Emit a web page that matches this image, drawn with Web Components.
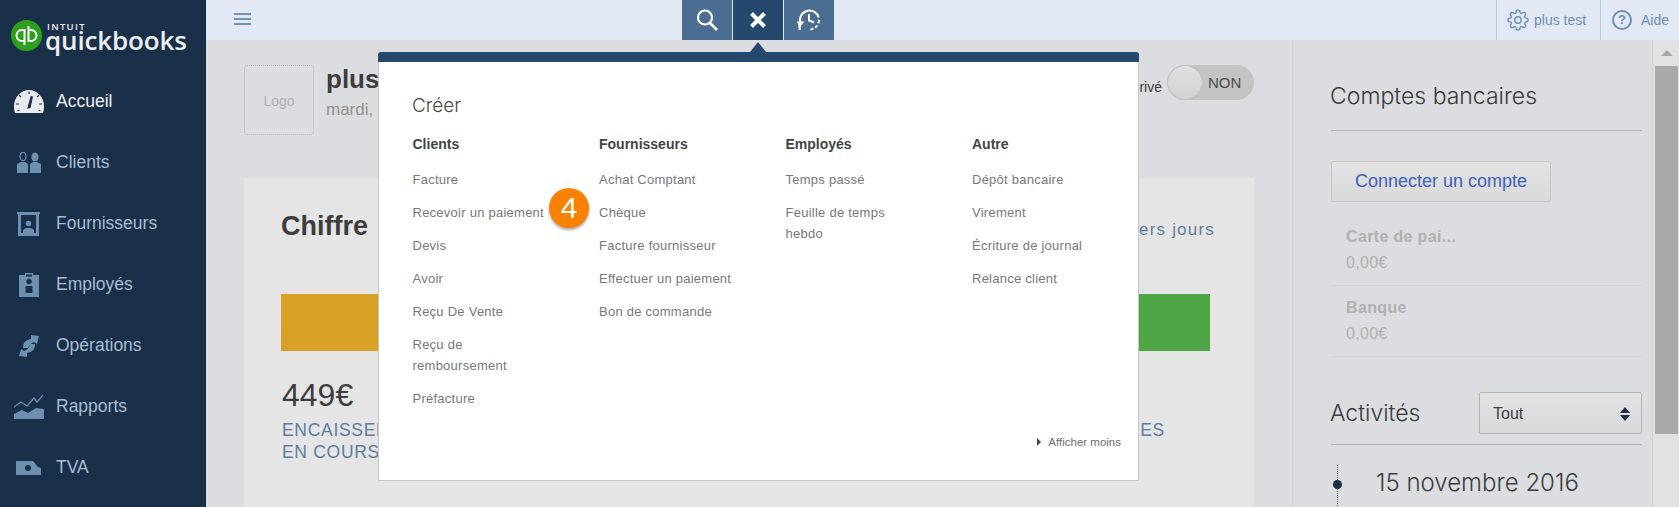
<!DOCTYPE html>
<html lang="fr">
<head>
<meta charset="utf-8">
<title>QuickBooks</title>
<style>
  html, body { margin: 0; height: 100%; overflow: hidden; background: #dcdde1; }
  body { font-family: "Liberation Sans", Arial, sans-serif; }
</style>
</head>
<body>
<qb-app></qb-app>
<script>
const light = '"Inter", "Liberation Sans", sans-serif';

const icons = {
  home: `<svg width="30" height="25" viewBox="0 0 30 25"><path fill="#e8ebef" d="M1 24C0 21 0 19 0 17 0 8 7 1 15 1s15 7 15 16c0 2 0 4-1 7z"/><path d="M14 19l2-.4 2.300-10.600-1.200-.2zM5 6l2 2M25 6l-2 2M15 2.500v2.500M2 15h3M25 15h3M3.500 22l2-1M26.500 22l-2-1" stroke="#1a2f48" stroke-width="1.200" fill="#1a2f48"/></svg>`,
  clients: `<svg width="24" height="22" viewBox="0 0 24 22"><g fill="#6d8fb0"><path d="M0 21v-9l4-2h4l3 2v9z"/><path d="M13 21v-9l3-2h4l4 2v9z"/><ellipse cx="18" cy="5" rx="3.600" ry="4.600"/></g><ellipse cx="6" cy="4.500" rx="3" ry="4.200" fill="none" stroke="#6d8fb0" stroke-width="1.300"/></svg>`,
  suppliers: `<svg width="23" height="24" viewBox="0 0 23 24"><path fill="#6d8fb0" d="M0 0h23v2h-1v22H1V2H0z"/><path fill="#1a2f48" d="M4 3h15v18h-2v-3l-3-2h-5l-3 2v3H4z"/><circle cx="11.500" cy="11.500" r="2.800" fill="#6d8fb0"/><path fill="#6d8fb0" d="M7 21v-3l2.500-1.500h4l2.500 1.500v3z"/></svg>`,
  employees: `<svg width="20" height="24" viewBox="0 0 20 24"><path fill="#6d8fb0" d="M0 2h6V0h8v2h6v22H0z"/><rect x="7" y="1.500" width="6" height="2" fill="#1a2f48"/><circle cx="10" cy="8.500" r="2.700" fill="#1a2f48"/><rect x="6.500" y="13" width="7" height="7" rx="1" fill="#1a2f48"/></svg>`,
  transactions: `<svg width="20" height="24" viewBox="0 0 20 24"><g fill="#6d8fb0"><path d="M4 14C4 8 7 6 12 5V1l8 1-2 8-3-2c-3 1-5 3-6 6z"/><path d="M16 10c0 6-3 8-8 9v4l-8-1 2-7 3 2c3-1 5-3 6-7z"/></g></svg>`,
  reports: `<svg width="30" height="24" viewBox="0 0 30 24"><path fill="none" stroke="#6d8fb0" stroke-width="1.300" d="M0 12l7-5 6 4 7-8 3 4 6-7"/><path fill="#6d8fb0" d="M0 24v-5l8-4 6 3 8-5 8 1v10z"/></svg>`,
  tax: `<svg width="25" height="14" viewBox="0 0 25 14"><path fill="#6d8fb0" fill-rule="evenodd" d="M0 0h17l5 6 3 1v7H0zM12 4a3 3 0 1 0 0 6 3 3 0 0 0 0-6z"/></svg>`,
  search: `<svg width="24" height="24" viewBox="0 0 24 24"><circle cx="10" cy="9.500" r="7" fill="none" stroke="#fff" stroke-width="2.200"/><path d="M15 15l7 7" stroke="#fff" stroke-width="2.600"/></svg>`,
  close: `<svg width="18" height="18" viewBox="0 0 18 18"><path d="M2.500 2.500l13 13M15.500 2.500l-13 13" stroke="#fff" stroke-width="4"/></svg>`,
  recent: `<svg width="24" height="24" viewBox="0 0 24 24"><g fill="none" stroke="#fff" stroke-width="2"><path d="M3.500 15A9.500 9.500 0 1 1 12.500 21.500" stroke-dasharray="30 2.500 3.500 2.500 3 2 3 2"/><path d="M12 6v6.500l5 2"/></g><path fill="#fff" d="M0 13.500h7.500l-3.700 4.500v4H1.500v-4z"/></svg>`,
  gear: `<svg width="22" height="22" viewBox="0 0 24 24" fill="none" stroke="#6c8fb3" stroke-width="1.500"><circle cx="12" cy="12" r="3.500"/><path d="M19.400 15a1.650 1.650 0 0 0 .33 1.820l.06.06a2 2 0 0 1 0 2.830 2 2 0 0 1-2.830 0l-.06-.06a1.650 1.650 0 0 0-1.820-.33 1.650 1.650 0 0 0-1 1.510V21a2 2 0 0 1-2 2 2 2 0 0 1-2-2v-.09A1.650 1.650 0 0 0 9 19.400a1.650 1.650 0 0 0-1.820.33l-.06.06a2 2 0 0 1-2.830 0 2 2 0 0 1 0-2.830l.06-.06a1.650 1.650 0 0 0 .33-1.820 1.650 1.650 0 0 0-1.510-1H3a2 2 0 0 1-2-2 2 2 0 0 1 2-2h.09A1.650 1.650 0 0 0 4.600 9a1.650 1.650 0 0 0-.33-1.820l-.06-.06a2 2 0 0 1 0-2.830 2 2 0 0 1 2.830 0l.06.06a1.650 1.650 0 0 0 1.820.33H9a1.650 1.650 0 0 0 1-1.510V3a2 2 0 0 1 2-2 2 2 0 0 1 2 2v.09a1.650 1.650 0 0 0 1 1.510 1.650 1.650 0 0 0 1.820-.33l.06-.06a2 2 0 0 1 2.830 0 2 2 0 0 1 0 2.830l-.06.06a1.650 1.650 0 0 0-.33 1.820V9a1.650 1.650 0 0 0 1.510 1H21a2 2 0 0 1 2 2 2 2 0 0 1-2 2h-.09a1.650 1.650 0 0 0-1.510 1z"/></svg>`,
};

// left navigation row
class QbNavItem extends HTMLElement {
  constructor() {
    super();
    const root = this.attachShadow({ mode: 'open' });
    root.innerHTML = `
      <style>
        :host { display: flex; align-items: center; height: 61px; color: #a9bdd2; font-size: 17.500px; }
        :host([active]) { color: #eef0f3; }
        .ico { width: 56px; padding: 0 12px 0 13px; box-sizing: border-box; display: flex; justify-content: center; }
      </style>
      <span class="ico">${icons[this.getAttribute('icon')]}</span><slot></slot>`;
  }
}
customElements.define('qb-nav-item', QbNavItem);

class QbSidebar extends HTMLElement {
  constructor() {
    super();
    const root = this.attachShadow({ mode: 'open' });
    root.innerHTML = `
      <style>
        :host { display: block; width: 206px; flex: none; background: #1a2f48; height: 507px; box-sizing: border-box; border-right: 1px solid #14263b; overflow: hidden; }
        .logo { display: flex; height: 71px; padding: 20px 0 0 11px; box-sizing: border-box; color: #eceef1; }
        .logo svg { flex: none; }
        .name { margin-left: 3px; display: flex; flex-direction: column; font-family: "Open Sans", sans-serif; }
        .intuit { font-size: 9.500px; line-height: 9px; letter-spacing: 1.300px; font-weight: 600; margin: 2px 0 0 2px; }
        .qb { font-size: 26px; line-height: 19px; font-weight: 600; letter-spacing: -.15px; }
      </style>
      <div class="logo">
        <svg width="31" height="31" viewBox="0 0 31 31"><circle cx="15.500" cy="15.500" r="15.500" fill="#2ca01c"/><g fill="none" stroke="#fff" stroke-width="2"><path d="M13.500 21h-2.500a5.500 5.500 0 0 1 0-11h2.500v15"/><path d="M17.500 10h2.500a5.500 5.500 0 0 1 0 11h-2.500V6"/></g></svg>
        <div class="name"><span class="intuit">INTUIT</span><span class="qb">quickbooks</span></div>
      </div>
      <slot></slot>`;
  }
}
customElements.define('qb-sidebar', QbSidebar);

class QbTopbar extends HTMLElement {
  constructor() {
    super();
    const root = this.attachShadow({ mode: 'open' });
    root.innerHTML = `
      <style>
        :host { display: flex; height: 40px; background: #e2e9f4; flex: none; color: #6c8fb3; font-size: 14px; }
        .burger { width: 17px; height: 12px; margin: 13px 0 0 28px; border-top: 2px solid #7094b8; border-bottom: 2px solid #7094b8; box-sizing: border-box; position: relative; }
        .burger::after { content: ""; position: absolute; left: 0; right: 0; top: 3px; height: 2px; background: #7094b8; }
        .tools { display: flex; margin-left: 431px; gap: 1px; }
        .tools span { width: 50px; height: 40px; background: #4a6d92; display: flex; align-items: center; justify-content: center; }
        .tools span.on { background: #25496e; }
        .right { display: flex; margin-left: auto; }
        .right div { display: flex; align-items: center; border-left: 1px solid #b8cce2; height: 40px; box-sizing: border-box; }
        .acct { width: 104px; padding-left: 10px; gap: 5px; }
        .help { width: 79px; padding-left: 11px; gap: 9px; }
        .q { width: 20px; height: 20px; border: 2px solid #6c8fb3; border-radius: 50%; box-sizing: border-box; text-align: center; line-height: 16px; font-weight: bold; font-size: 13px; }
      </style>
      <div class="burger"></div>
      <div class="tools">
        <span>${icons.search}</span><span class="on">${icons.close}</span><span>${icons.recent}</span>
      </div>
      <div class="right">
        <div class="acct">${icons.gear}<span>plus test</span></div>
        <div class="help"><span class="q">?</span><span>Aide</span></div>
      </div>`;
  }
}
customElements.define('qb-topbar', QbTopbar);

// dimmed dashboard under the create menu
class QbOverview extends HTMLElement {
  constructor() {
    super();
    const root = this.attachShadow({ mode: 'open' });
    root.innerHTML = `
      <style>
        :host { display: block; width: 1087px; flex: none; box-sizing: border-box; padding: 25px 38px 0 38px; border-right: 1px solid #cfd0d4; overflow: hidden; color: #3d3d3d; }
        .head { display: flex; height: 113px; }
        .logo { width: 70px; height: 70px; box-sizing: border-box; border: 1px dotted #b5b5b5; border-radius: 3px; display: flex; align-items: center; justify-content: center; color: #b0b0b0; font-size: 14px; padding-top: 2px; }
        .who { margin-left: 12px; }
        .who b { display: block; font-size: 26px; line-height: 30px; margin-top: -1px; }
        .who span { display: block; font-size: 17px; color: #8f8f8f; line-height: 32px; }
        .priv { margin-left: auto; display: flex; align-items: flex-start; font-size: 14px; gap: 5px; }
        .priv span { line-height: 44px; }
        .toggle { width: 87px; height: 35px; border-radius: 18px; background: #c4c4c4; display: flex; align-items: center; font-size: 15px; color: #4a4a4a; }
        .toggle i { width: 34px; height: 33px; margin: 0 6px 0 1px; border-radius: 50%; background: linear-gradient(#e0e0e1, #d2d2d3); display: block; box-shadow: 0 0 1px #999; }
        .card { background: #e5e5e6; height: 360px; padding: 33px 38px 0 37px; box-sizing: border-box; }
        .title { display: flex; justify-content: space-between; align-items: baseline; }
        .title b { font-size: 27px; }
        .title span { font-size: 17px; color: #5f7d9d; letter-spacing: 1.200px; margin-right: 1px; }
        .bar { display: flex; height: 57px; margin-top: 52px; margin-right: 6px; }
        .bar i { display: block; }
        .amt { display: flex; justify-content: space-between; margin-top: 25px; padding-left: 1px; padding-right: 51px; }
        .amt strong { display: block; font-weight: normal; font-size: 32px; line-height: 38px; }
        .amt small { display: block; font-size: 17.500px; line-height: 22px; letter-spacing: .7px; color: #5c7c9f; margin-top: 5px; }
      </style>
      <div class="head">
        <div class="logo">Logo</div>
        <div class="who"><b>plus</b><span>mardi,</span></div>
        <div class="priv"><span>Mode privé</span><div class="toggle"><i></i>NON</div></div>
      </div>
      <div class="card">
        <div class="title"><b>Chiffre</b><span>30 derniers jours</span></div>
        <div class="bar">
          <i style="flex:1;background:#d8a024"></i>
          <i style="flex:1;background:#4ea646"></i>
        </div>
        <div class="amt">
          <div><strong>449€</strong><small>ENCAISSEMENTS<br>EN COURS</small></div>
          <div><small style="margin-top:43px">LES</small></div>
        </div>
      </div>`;
  }
}
customElements.define('qb-overview', QbOverview);

class QbRail extends HTMLElement {
  constructor() {
    super();
    const root = this.attachShadow({ mode: 'open' });
    root.innerHTML = `
      <style>
        :host { display: block; width: 360px; flex: none; box-sizing: border-box; padding: 0 10px 0 38px; border-right: 1px solid #cfd0d4; color: #3d3d3d; overflow: hidden; }
        h2 { font: 300 23px/30px ${light}; margin: 41px 0 0; height: 49px; border-bottom: 1px solid #b4b4b4; color: #3a3a3a; text-indent: -1px; }
        .btn { width: 220px; height: 41px; box-sizing: border-box; margin-top: 30px; border: 1px solid #c8c8c8; border-radius: 2px; background: linear-gradient(#e3e3e4, #d9d9da); color: #3e60bd; font-size: 18px; display: flex; align-items: center; justify-content: center; }
        .acc { padding-left: 15px; height: 71px; border-bottom: 1px solid #d4d5d8; color: #b0b0b0; box-sizing: border-box; }
        .acc b { display: block; font-size: 16px; line-height: 20px; padding-top: 25px; letter-spacing: .35px; }
        .acc span { display: block; font-size: 16px; line-height: 20px; margin-top: 6px; letter-spacing: .3px; }
        .acc.first { height: 84px; }
        .row { display: flex; justify-content: space-between; align-items: center; height: 88px; border-bottom: 1px solid #b4b4b4; box-sizing: border-box; padding: 35px 0 10px; }
        .row h3 { font: 300 23px/30px ${light}; margin: 0 0 0 -1px; color: #3a3a3a; }
        .sel { width: 163px; height: 42px; box-sizing: border-box; border: 1px solid #b4b4b4; border-radius: 2px; background: linear-gradient(#e3e3e4, #d9d9da); display: flex; align-items: center; justify-content: space-between; padding: 1px 11px 0 13px; font-size: 16px; }
        .sel svg { display: block; }
        .date { display: flex; align-items: center; height: 63px; font: 300 24px/30px ${light}; position: relative; padding: 12px 0 0 45px; box-sizing: border-box; }
        .date::before { content: ""; position: absolute; left: 6px; top: 20px; bottom: 0; border-left: 1px dotted #555; }
        .date::after { content: ""; position: absolute; left: 2px; top: 35px; width: 9px; height: 9px; border-radius: 50%; background: #1a2f48; }
      </style>
      <h2>Comptes bancaires</h2>
      <div class="btn">Connecter un compte</div>
      <div class="acc first"><b>Carte de pai...</b><span>0,00€</span></div>
      <div class="acc"><b style="padding-top:12px">Banque</b><span>0,00€</span></div>
      <div class="row"><h3>Activités</h3><div class="sel">Tout<svg width="10" height="14" viewBox="0 0 10 14"><path fill="#1a2f48" d="M5 0l5 6H0zM5 14l5-6H0z"/></svg></div></div>
      <div class="date">15 novembre 2016</div>`;
  }
}
customElements.define('qb-rail', QbRail);

class QbScrollbar extends HTMLElement {
  constructor() {
    super();
    const root = this.attachShadow({ mode: 'open' });
    root.innerHTML = `
      <style>
        :host { display: flex; flex-direction: column; align-items: center; flex: 1; background: #e1e2e4; padding-left: 2px; padding-right: 1px; box-sizing: border-box; }
        .up { width: 0; height: 0; margin-top: 10px; border: 6px solid transparent; border-top: 0; border-bottom: 6px solid #a8a8a8; }
        .thumb { margin-top: 10px; width: 100%; height: 368px; background: #a9a9a9; }
      </style>
      <div class="up"></div><div class="thumb"></div>`;
  }
}
customElements.define('qb-scrollbar', QbScrollbar);

class QbMenuCol extends HTMLElement {
  constructor() {
    super();
    const root = this.attachShadow({ mode: 'open' });
    root.innerHTML = `
      <style>
        :host { display: block; width: 186.500px; flex: none; }
        b { display: block; font-size: 14px; line-height: 20px; color: #434343; margin-bottom: 9px; }
      </style>
      <b>${this.getAttribute('heading')}</b><slot></slot>`;
  }
}
customElements.define('qb-menu-col', QbMenuCol);

class QbMenuLink extends HTMLElement {
  constructor() {
    super();
    const root = this.attachShadow({ mode: 'open' });
    root.innerHTML = `
      <style>
        :host { display: block; width: 135px; font-size: 13px; line-height: 21px; padding: 6px 0; color: #787878; letter-spacing: .25px; }
      </style>
      <slot></slot>`;
  }
}
customElements.define('qb-menu-link', QbMenuLink);

// the create menu, opened from the X button
class QbCreatePanel extends HTMLElement {
  constructor() {
    super();
    const root = this.attachShadow({ mode: 'open' });
    root.innerHTML = `
      <style>
        :host { position: absolute; left: 378px; top: 52px; width: 761px; height: 429px; box-sizing: border-box; background: #fff; border: 1px solid #c6c6c6; border-top: 0; border-radius: 3px 3px 0 0; }
        .band { height: 10px; margin: 0 -1px; background: #25496e; border-radius: 3px 3px 0 0; position: relative; }
        .band::before { content: ""; position: absolute; left: 372px; top: -10px; border: 8px solid transparent; border-top: 0; border-bottom: 10px solid #25496e; }
        h2 { font: 300 19px/26px ${light}; color: #474747; margin: 31px 0 0 33px; height: 41px; }
        .cols { display: flex; padding-left: 33.500px; }
        .more { position: absolute; right: 17px; bottom: 32px; font-size: 11.500px; color: #6e6e6e; display: flex; align-items: center; gap: 7px; }
        .more::before { content: ""; border: 4px solid transparent; border-left: 4px solid #444; border-right: 0; }
        .step { position: absolute; left: 170px; top: 136px; width: 40px; height: 40px; border-radius: 50%; background: #fb8100; color: #fff; font: 30px/40px "Liberation Sans", sans-serif; text-align: center; box-shadow: 0 2px 3px rgba(0,0,0,.35); }
      </style>
      <div class="band"></div>
      <h2>Créer</h2>
      <div class="cols"><slot></slot></div>
      <div class="more">Afficher moins</div>
      <div class="step">4</div>`;
  }
}
customElements.define('qb-create-panel', QbCreatePanel);

class QbApp extends HTMLElement {
  constructor() {
    super();
    const root = this.attachShadow({ mode: 'open' });
    const nav = [['home', 'Accueil'], ['clients', 'Clients'], ['suppliers', 'Fournisseurs'], ['employees', 'Employés'], ['transactions', 'Opérations'], ['reports', 'Rapports'], ['tax', 'TVA']];
    const menu = {
      Clients: ['Facture', 'Recevoir un paiement', 'Devis', 'Avoir', 'Reçu De Vente', 'Reçu de remboursement', 'Préfacture'],
      Fournisseurs: ['Achat Comptant', 'Chèque', 'Facture fournisseur', 'Effectuer un paiement', 'Bon de commande'],
      'Employés': ['Temps passé', 'Feuille de temps hebdo'],
      Autre: ['Dépôt bancaire', 'Virement', 'Écriture de journal', 'Relance client'],
    };
    root.innerHTML = `
      <style>
        :host { display: flex; width: 1679px; height: 507px; overflow: hidden; position: relative; font-family: "Liberation Sans", Arial, sans-serif; }
        .main { flex: 1; display: flex; flex-direction: column; min-width: 0; }
        .body { flex: 1; display: flex; min-height: 0; background: #dcdde1; }
      </style>
      <qb-sidebar>
        ${nav.map(n => `<qb-nav-item icon="${n[0]}"${n[0] === 'home' ? ' active' : ''}>${n[1]}</qb-nav-item>`).join('')}
      </qb-sidebar>
      <div class="main">
        <qb-topbar></qb-topbar>
        <div class="body"><qb-overview></qb-overview><qb-rail></qb-rail><qb-scrollbar></qb-scrollbar></div>
      </div>
      <qb-create-panel>
        ${Object.keys(menu).map(k => `<qb-menu-col heading="${k}">${menu[k].map(l => `<qb-menu-link>${l}</qb-menu-link>`).join('')}</qb-menu-col>`).join('')}
      </qb-create-panel>`;
  }
}
customElements.define('qb-app', QbApp);
</script>
</body>
</html>
